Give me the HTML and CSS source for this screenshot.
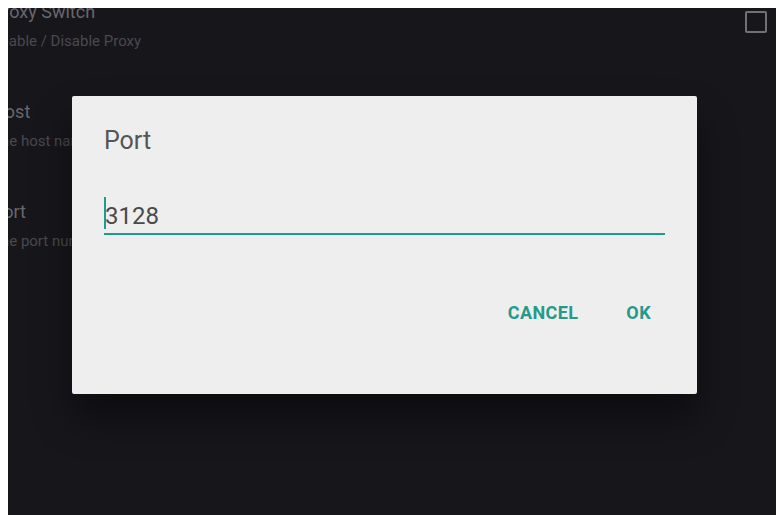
FILE: index.html
```html
<!DOCTYPE html>
<html lang="en">
<head>
	<meta charset="UTF-8">
	<title>Proxy Settings</title>
	<link rel="stylesheet" href="styles.css">
</head>
<body>
	<div id="screen">
		<div class="prefs">
			<div class="pref">
				<div class="pref-text">
					<div class="pref-title">Proxy Switch</div>
					<div class="pref-summary">Enable / Disable Proxy</div>
				</div>
				<div class="checkbox"></div>
			</div>
			<div class="pref">
				<div class="pref-text">
					<div class="pref-title">Host</div>
					<div class="pref-summary">The host name</div>
				</div>
			</div>
			<div class="pref">
				<div class="pref-text">
					<div class="pref-title">Port</div>
					<div class="pref-summary">The port number</div>
				</div>
			</div>
		</div>

		<!-- 端口输入对话框 -->
		<div class="dialog">
			<div class="dialog-title">Port</div>
			<div class="field"><span class="cursor"></span>3128</div>
			<div class="actions">
				<span class="btn">CANCEL</span>
				<span class="btn">OK</span>
			</div>
		</div>
	</div>
</body>
</html>
```

FILE: styles.css
```css
*{margin: 0;padding: 0;}
body {
	background: #fff;
	font-family: Roboto, "Liberation Sans", sans-serif;
	overflow: hidden;
}
#screen {
	height: 507px;
	margin: 8px 3px 0 8px;
	background: #17161b;
	position: relative;
	overflow: hidden;
}
.prefs {
	margin: -32px 0 0 -16px;
}
.pref {
	display: flex;
	align-items: flex-start;
	padding: 24px 9px 24px 0;
}
.pref-text {
	flex: 1;
}
.pref-title {
	font-size: 18px;
	line-height: 24px;
	color: #68676c;
}
.pref-summary {
	margin-top: 6px;
	font-size: 15px;
	line-height: 22px;
	color: #4a494e;
}
.checkbox {
	width: 18px;
	height: 18px;
	margin-top: 11px;
	border: 2px solid #717075;
	border-radius: 2px;
}

.dialog {
	position: absolute;
	left: 64px;
	top: 88px;
	width: 625px;
	height: 298px;
	box-sizing: border-box;
	padding: 30px 32px 0;
	background: #eeeeee;
	border-radius: 2px;
	box-shadow: 0 24px 38px rgba(0, 0, 0, 0.45);
}
.dialog-title {
	font-size: 25px;
	line-height: 30px;
	color: #555;
}
.field {
	margin-top: 41px;
	padding-bottom: 2px;
	font-size: 24px;
	line-height: 30px;
	color: #4a4a4a;
	border-bottom: 2px solid #1f9c8e;
}
.cursor {
	display: inline-block;
	width: 2px;
	height: 32px;
	margin-right: -1px;
	vertical-align: -5px;
	background: #1f9c8e;
}
.actions {
	display: flex;
	justify-content: flex-end;
	gap: 16px;
	margin: 60px -2px 0 0;
}
.btn {
	padding: 0 16px;
	line-height: 36px;
	font-size: 18px;
	font-weight: bold;
	letter-spacing: 0.4px;
	color: #26998b;
}
```
